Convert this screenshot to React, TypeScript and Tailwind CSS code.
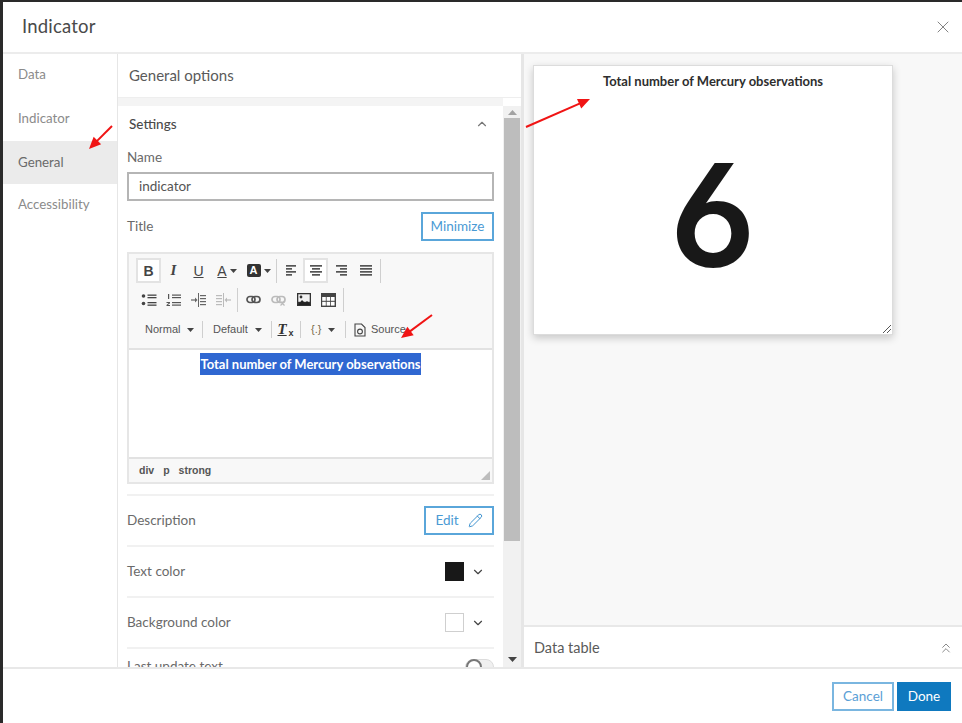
import { ChevronUp, ChevronDown, ChevronsUp, Pencil, X } from "lucide-react";

const Sep = ({ h = "h-[24px]", m = "ml-[2px] mr-[1px]" }: { h?: string; m?: string }) => <div className={`w-px ${h} bg-[#cfcfcf] ${m} shrink-0`} />;

const Caret = () => (
  <svg width="7" height="4" viewBox="0 0 7 4" className="shrink-0"><path d="M0 0h7L3.5 4z" fill="#444" /></svg>
);

const Lines = ({ rows }: { rows: [number, number][] }) => (
  <svg width="14" height="14" viewBox="0 0 14 14">
    {rows.map(([x, w], i) => (
      <rect key={i} x={x} y={1 + i * 3} width={w} height="1.7" fill="#555" />
    ))}
  </svg>
);

const Btn = ({ children, active, w = "w-[25px]" }: { children: React.ReactNode; active?: boolean; w?: string }) => (
  <div className={`${w} h-[25px] flex items-center justify-center shrink-0 ${active ? "bg-white border-2 border-[#e3e3e3]" : ""}`}>
    {children}
  </div>
);

const Glyph = ({ c, cls = "" }: { c: string; cls?: string }) => (
  <span className={`font-['Liberation_Sans',sans-serif] text-[#444] text-[14px] leading-none ${cls}`}>{c}</span>
);

const ListBullet = () => (
  <svg width="16" height="14" viewBox="0 0 16 14" fill="#444">
    <circle cx="2.5" cy="3" r="1.8" /><circle cx="2.5" cy="10.5" r="1.8" />
    <rect x="6.5" y="1.5" width="9" height="1.3" /><rect x="6.5" y="4" width="9" height="1.3" />
    <rect x="6.5" y="9" width="9" height="1.3" /><rect x="6.5" y="11.5" width="9" height="1.3" />
  </svg>
);
const ListNum = () => (
  <svg width="16" height="14" viewBox="0 0 16 14" fill="#555">
    <rect x="2" y="1" width="1.2" height="5" />
    <path d="M0.5 9h3.5v1.2L1.8 12H4v1H0.5v-1l2.2-2H0.5z" />
    <rect x="6" y="1.5" width="9" height="1.2" /><rect x="6" y="4" width="9" height="1.2" />
    <rect x="6" y="9" width="9" height="1.2" /><rect x="6" y="11.5" width="9" height="1.2" />
  </svg>
);
const Indent = ({ color, flip }: { color: string; flip?: boolean }) => (
  <svg width="15" height="14" viewBox="0 0 15 14" fill={color} style={flip ? { transform: "scaleX(-1)" } : undefined}>
    <rect x="7" y="0" width="1" height="14" />
    <rect x="9" y="2" width="6" height="1.2" /><rect x="9" y="5" width="6" height="1.2" />
    <rect x="9" y="8" width="6" height="1.2" /><rect x="9" y="11" width="6" height="1.2" />
    <rect x="0" y="6.4" width="5" height="1.2" /><path d="M4 4.5L6.5 7 4 9.5z" />
  </svg>
);
const LinkIco = ({ color, x }: { color: string; x?: boolean }) => (
  <svg width="15" height="12" viewBox="0 0 15 12" fill="none" stroke={color} strokeWidth="1.7">
    <rect x="1" y="2.5" width="8" height="6" rx="3" /><rect x="6" y="2.5" width="8" height="6" rx="3" />
    {x && <path d="M9.5 7.5l4 4m0-4l-4 4" strokeWidth="1.2" />}
  </svg>
);
const ImageIco = () => (
  <svg width="14" height="13" viewBox="0 0 14 13">
    <rect x="0" y="0" width="14" height="13" fill="#333" />
    <rect x="1.3" y="1.3" width="11.4" height="7.5" fill="#f2f2f2" />
    <path d="M1 12l4-5 3 3 2-2 3 3v1z" fill="#222" /><circle cx="4" cy="4" r="1.4" fill="#333" />
  </svg>
);
const TableIco = () => (
  <svg width="15" height="14" viewBox="0 0 15 14">
    <rect x="0" y="0" width="15" height="14" fill="#444" />
    {[0, 1, 2].map((c) => [0, 1].map((r) => (
      <rect key={`${c}${r}`} x={1.2 + c * 4.4} y={4 + r * 4.8} width="3.6" height="3.8" fill="#fff" />
    )))}
  </svg>
);
const ClearIco = () => (
  <span className="relative w-[16px] h-[16px] block">
    <span className="font-['Liberation_Serif',serif] italic font-bold text-[15px] leading-[14px] text-[#333] underline">T</span>
    <span className="absolute right-0 bottom-0 font-['Liberation_Sans',sans-serif] text-[9px] leading-none font-bold text-[#333]">x</span>
  </span>
);
const SourceIco = () => (
  <svg width="12" height="14" viewBox="0 0 12 14" fill="none" stroke="#444" strokeWidth="1.1">
    <path d="M1 1h6.5L11 4.5V13H1z" /><circle cx="6" cy="8.5" r="2.4" />
  </svg>
);

const Row = ({ label, children }: { label: string; children: React.ReactNode }) => (
  <div className="h-[51px] flex items-center justify-between text-[13.5px] text-[#6a6a6a] border-b-2 border-[#f1f1f1]">
    <span>{label}</span>
    {children}
  </div>
);

const Swatch = ({ cls }: { cls: string }) => (
  <div className="flex items-center gap-[7px] pr-[9px]">
    <div className={`w-[19px] h-[19px] ${cls}`} />
    <ChevronDown size={14} color="#444" />
  </div>
);

const Arrow = ({ x1, y1, x2, y2 }: { x1: number; y1: number; x2: number; y2: number }) => {
  const a = Math.atan2(y2 - y1, x2 - x1);
  const l = 13, w = 0.42;
  const p = (s: number) => `${x2 - l * Math.cos(a + s * w)},${y2 - l * Math.sin(a + s * w)}`;
  const mx = x2 - 9 * Math.cos(a), my = y2 - 9 * Math.sin(a);
  return (
    <g>
      <line x1={x1} y1={y1} x2={mx} y2={my} stroke="#f01414" strokeWidth="2" />
      <polygon points={`${x2},${y2} ${p(1)} ${p(-1)}`} fill="#f01414" />
    </g>
  );
};

export default function App() {
  return (
    <div className="relative w-[962px] h-[723px] overflow-hidden bg-[#2a2a2a] pl-[3px] pt-[2px] font-['Lato',sans-serif]">
      <div className="w-full h-full bg-white flex flex-col">
        <header className="h-[52px] shrink-0 border-b-2 border-[#ececec] flex items-center justify-between pl-[19px] pr-[9px]">
          <h1 className="text-[18.5px] text-[#4a4a4a] tracking-[0.2px]">Indicator</h1>
          <X size={20} color="#777" strokeWidth={1.1} />
        </header>

        <div className="h-[615px] shrink-0 flex border-b-2 border-[#e8e8e8] overflow-hidden">
          <nav className="w-[115px] shrink-0 border-r border-[#e6e6e6] text-[13.3px] text-[#8b8b8b] flex flex-col">
            <div className="h-[43.4px] flex items-center pl-[15px] pb-[1px]">Data</div>
            <div className="h-[43.4px] flex items-center pl-[15px] pb-[1px]">Indicator</div>
            <div className="h-[43.4px] flex items-center pl-[15px] bg-[#ebebeb] text-[#6a6a6a]">General</div>
            <div className="h-[43.4px] flex items-center pl-[15px] pb-[1px]">Accessibility</div>
          </nav>

          <section className="w-[403px] shrink-0 flex flex-col">
            <div className="h-[44px] shrink-0 flex items-center pl-[11px] pb-[1px] text-[15px] text-[#5a5a5a] border-b border-[#eeeeee]">
              General options
            </div>
            <div className="h-[8px] shrink-0 bg-[#f4f4f4] w-[385px]" />
            <div className="flex-1 flex min-h-0">
              <div className="w-[385px] shrink-0 px-[9px] overflow-hidden">
                <div className="h-[36px] flex items-center justify-between pl-[2px] pr-[5px] text-[13.5px] font-medium text-[#4a4a4a]">
                  <span>Settings</span>
                  <ChevronUp size={14} color="#777" />
                </div>
                <div className="text-[13.5px] text-[#6a6a6a] h-[30px] pt-[5px] leading-[20px]">Name</div>
                <div className="h-[29px] border-2 border-[#b5b5b5] flex items-center pl-[10px] text-[13.5px] text-[#555]">indicator</div>
                <div className="h-[29px] mt-[11px] flex items-center justify-between text-[13.5px] text-[#6a6a6a]">
                  <span>Title</span>
                  <div className="w-[73px] h-[29px] border-2 border-[#5aa6da] flex items-center justify-center text-[#4a9ad4]">Minimize</div>
                </div>

                <div className="mt-[11px] border-2 border-[#e6e6e6] h-[232px] flex flex-col font-['Liberation_Sans',sans-serif]">
                  <div className="h-[96px] bg-[#f8f8f8] border-b-2 border-[#e2e2e2] pl-[7px] pt-[4px] shrink-0">
                    <div className="h-[25px] flex items-center">
                      <Btn active><Glyph c="B" cls="font-bold" /></Btn>
                      <Btn><span className="font-['Liberation_Serif',serif] italic font-bold text-[15px] text-[#444]">I</span></Btn>
                      <Btn><Glyph c="U" cls="underline" /></Btn>
                      <Btn w="w-[32px]">
                        <span className="flex items-center gap-[3px]"><Glyph c="A" cls="underline" /><Caret /></span>
                      </Btn>
                      <Btn w="w-[31px]">
                        <span className="flex items-center gap-[3px]">
                          <span className="w-[14px] h-[13px] rounded-[2px] bg-[#333] flex items-center justify-center text-white text-[11px] font-bold leading-none">A</span>
                          <Caret />
                        </span>
                      </Btn>
                      <Sep />
                      <Btn><Lines rows={[[2, 10], [2, 6], [2, 10], [2, 6]]} /></Btn>
                      <Btn active><Lines rows={[[1, 12], [3, 8], [1, 12], [3, 8]]} /></Btn>
                      <Btn><Lines rows={[[2, 11], [6, 7], [2, 11], [6, 7]]} /></Btn>
                      <Btn><Lines rows={[[1, 12], [1, 12], [1, 12], [1, 12]]} /></Btn>
                      <Sep />
                    </div>
                    <div className="h-[25px] mt-[4px] flex items-center">
                      <Btn><ListBullet /></Btn>
                      <Btn><ListNum /></Btn>
                      <Btn><Indent color="#666" /></Btn>
                      <Btn><Indent color="#bbb" flip /></Btn>
                      <Sep m="ml-[1px] mr-[3px]" />
                      <Btn><LinkIco color="#555" /></Btn>
                      <Btn><LinkIco color="#bbb" x /></Btn>
                      <Btn><ImageIco /></Btn>
                      <Btn><TableIco /></Btn>
                      <Sep />
                    </div>
                    <div className="h-[25px] mt-[5px] flex items-center text-[11px] text-[#555]">
                      <div className="w-[64px] flex items-center pl-[9px] gap-[7px] shrink-0"><span>Normal</span><Caret /></div>
                      <Sep h="h-[17px]" />
                      <div className="w-[65px] flex items-center pl-[9px] gap-[7px] shrink-0"><span>Default</span><Caret /></div>
                      <Sep h="h-[17px]" />
                      <Btn w="w-[25px]"><ClearIco /></Btn>
                      <Sep h="h-[17px]" />
                      <div className="w-[41px] flex items-center pl-[9px] gap-[7px] shrink-0 text-[#7a6a4a]"><span>{"{.}"}</span><Caret /></div>
                      <Sep h="h-[17px]" />
                      <div className="flex items-center pl-[7px] gap-[5px]"><SourceIco /><span>Source</span></div>
                    </div>
                  </div>
                  <div className="flex-1 bg-white text-center pt-[3px] font-['Lato',sans-serif] text-[13px] font-bold leading-[22px]">
                    <span className="bg-[#2f67d1] text-white inline-block h-[22px] w-[221px]">Total number of Mercury observations</span>
                  </div>
                  <div className="relative h-[25px] shrink-0 bg-[#f8f8f8] border-t-2 border-[#e2e2e2] flex items-center pl-[10px] gap-[9px] text-[10.5px] font-bold text-[#555]">
                    <span>div</span><span>p</span><span>strong</span>
                    <svg width="9" height="9" viewBox="0 0 9 9" className="absolute right-[2px] bottom-[2px]"><path d="M9 0v9H0z" fill="#bdbdbd" /></svg>
                  </div>
                </div>

                <div className="h-[12px] border-b-2 border-[#f1f1f1]" />
                <Row label="Description">
                  <div className="w-[70px] h-[29px] border-2 border-[#5aa6da] flex items-center justify-center gap-[9px] text-[#4a9ad4]">
                    <span>Edit</span><Pencil size={15} color="#3f93d0" strokeWidth={1.6} />
                  </div>
                </Row>
                <Row label="Text color"><Swatch cls="bg-[#181818]" /></Row>
                <Row label="Background color"><Swatch cls="bg-white border border-[#cfcfcf]" /></Row>
                <div className="h-[33px] pt-[7px] flex justify-between text-[13.5px] text-[#6a6a6a]">
                  <span className="leading-[20px]">Last update text</span>
                  <div className="relative w-[29px] h-[16px] mt-[3px] rounded-full bg-[#f0f0f0] border border-[#dcdcdc]">
                    <div className="absolute left-0 top-[-1px] w-[16px] h-[16px] rounded-full bg-white border-2 border-[#777]" />
                  </div>
                </div>
              </div>

              <div className="w-[18px] shrink-0 bg-[#f1f1f1] flex flex-col items-center">
                <div className="h-[12px] flex items-center justify-center">
                  <svg width="9" height="5" viewBox="0 0 9 5"><path d="M4.5 0L9 5H0z" fill="#a3a3a3" /></svg>
                </div>
                <div className="w-[16px] h-[423px] bg-[#bdbdbd]" />
                <div className="flex-1" />
                <div className="h-[16px] flex items-center justify-center">
                  <svg width="9" height="5" viewBox="0 0 9 5"><path d="M0 0h9L4.5 5z" fill="#444" /></svg>
                </div>
              </div>
            </div>
          </section>

          <section className="flex-1 flex flex-col border-l-[3px] border-[#e6e6e6] min-w-0">
            <div className="flex-1 bg-[#f8f8f8] pl-[9px] pt-[11px]">
              <div className="relative w-[360px] h-[270px] bg-white border border-[#dcdcdc] shadow-[0_3px_8px_rgba(0,0,0,0.2)] flex flex-col items-center">
                <div className="text-[13px] font-bold text-[#2e2e2e] leading-[16px] mt-[7px]">Total number of Mercury observations</div>
                <div className="font-['Inter',sans-serif] text-[143px] leading-none font-semibold text-[#181818] mt-[54px] [font-feature-settings:'cv03']">6</div>
                <svg width="10" height="10" viewBox="0 0 10 10" className="absolute right-0 bottom-0" stroke="#555" strokeWidth="1" fill="none">
                  <path d="M1 9l8-8M5 9l4-4" />
                </svg>
              </div>
            </div>
            <div className="h-[42px] shrink-0 border-t-2 border-[#e8e8e8] bg-white flex items-center justify-between pl-[10px] pr-[8px] pt-[1px] text-[14.5px] text-[#5a5a5a]">
              <span>Data table</span>
              <ChevronsUp size={16} color="#777" strokeWidth={1.3} />
            </div>
          </section>
        </div>

        <footer className="flex-1 flex items-start justify-end gap-[3px] pt-[13px] pr-[11px] text-[13.5px]">
          <div className="w-[62px] h-[29px] border-2 border-[#7ab6e0] flex items-center justify-center text-[#5aa0d6]">Cancel</div>
          <div className="w-[54px] h-[29px] bg-[#0f79bf] flex items-center justify-center text-white">Done</div>
        </footer>
      </div>

      <svg className="absolute inset-0 pointer-events-none" width="962" height="723">
        <Arrow x1={112} y1={126} x2={89} y2={149} />
        <Arrow x1={526} y1={127} x2={590} y2={99} />
        <Arrow x1={432} y1={315} x2={401} y2={338} />
      </svg>
    </div>
  );
}
